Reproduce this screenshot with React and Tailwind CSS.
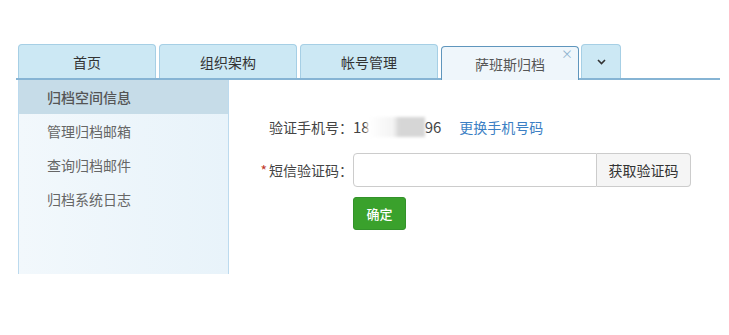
import React from "react";

const font = { fontFamily: '"Noto Sans CJK SC", "Noto Sans", sans-serif' };

function Tab({ label, active, close }) {
  if (active) {
    return (
      <div className="relative w-[138px] h-[34px] -mb-[2px] rounded-t-[4px] border border-b-0 border-[#5f96bd] bg-[#eff6fb] flex items-center justify-center text-[14px] text-[#555] pt-[1px]">
        {label}
        {close && (
          <span className="absolute right-[5px] top-[0px] text-[12px] leading-[14px] text-[#8fb3cf]">×</span>
        )}
      </div>
    );
  }
  return (
    <div className="w-[138px] h-[34px] rounded-t-[4px] border border-b-0 border-[#a6cfe5] bg-[#cce8f4] flex items-center justify-center text-[14px] text-[#333] pt-[1px]">
      {label}
    </div>
  );
}

export default function App() {
  const items = ["归档空间信息", "管理归档邮箱", "查询归档邮件", "归档系统日志"];
  return (
    <div className="w-[729px] h-[335px] bg-white pt-[45px]" style={font}>
      <div className="ml-[16px] w-[704px] flex items-end gap-[3px] pl-[2px] border-b-2 border-[#86b4d4] h-[35px]">
        <Tab label="首页" />
        <Tab label="组织架构" />
        <Tab label="帐号管理" />
        <Tab label="萨班斯归档" active close />
        <div className="w-[40px] h-[34px] -ml-[1px] rounded-t-[4px] border border-b-0 border-[#a6cfe5] bg-[#cce8f4] flex items-center justify-center">
          <svg width="9" height="6" viewBox="0 0 9 6" className="mt-[1px]">
            <path d="M1 1 L4.5 4.5 L8 1" fill="none" stroke="#333" strokeWidth="1.6" />
          </svg>
        </div>
      </div>
      <div className="flex ml-[18px]">
        <div className="w-[211px] h-[194px] border-l border-r border-[#bcdaee] bg-gradient-to-r from-[#f2f8fc] to-[#e8f3fa]">
          {items.map((t, i) => (
            <div
              key={t}
              className={
                "h-[34px] flex items-center pl-[28px] text-[14px] " +
                (i === 0 ? "bg-[#c6dce8] text-[#555] font-medium" : "text-[#666]")
              }
            >
              {t}
            </div>
          ))}
        </div>
        <div className="flex-1 pt-[30px] text-[14px] text-[#444]">
          <div className="flex items-center h-[34px]">
            <div className="w-[124px] text-right">验证手机号：</div>
            <div className="flex items-center text-[15px]">
              <span>18</span>
              <span
                className="inline-block w-[58px] h-[20px] blur-[1.5px] -ml-[3px]"
                style={{ background: "linear-gradient(to right, rgba(255,255,255,0.9) 0%, #f4f4f4 45%, #d6d6d6 55%, #d6d6d6 100%)" }}
              />
              <span>96</span>
            </div>
            <a className="ml-[18px] text-[#3b7fc4]">更换手机号码</a>
          </div>
          <div className="flex items-center h-[34px] mt-[9px]">
            <div className="w-[124px] text-right">
              <span className="text-[#c0392b] mr-[2px]">*</span>短信验证码：
            </div>
            <div className="flex h-[34px]">
              <div className="w-[244px] h-full border border-[#ccc] rounded-l-[4px] bg-white" />
              <div className="w-[94px] h-full border border-l-0 border-[#ccc] rounded-r-[4px] bg-[#f5f5f5] flex items-center justify-center text-[#333]">
                获取验证码
              </div>
            </div>
          </div>
          <div className="ml-[124px] mt-[10px]">
            <div className="w-[53px] h-[33px] rounded-[3px] bg-[#3aa12c] border border-[#33922a] flex items-center justify-center text-white text-[13px] font-medium">
              确定
            </div>
          </div>
        </div>
      </div>
    </div>
  );
}
